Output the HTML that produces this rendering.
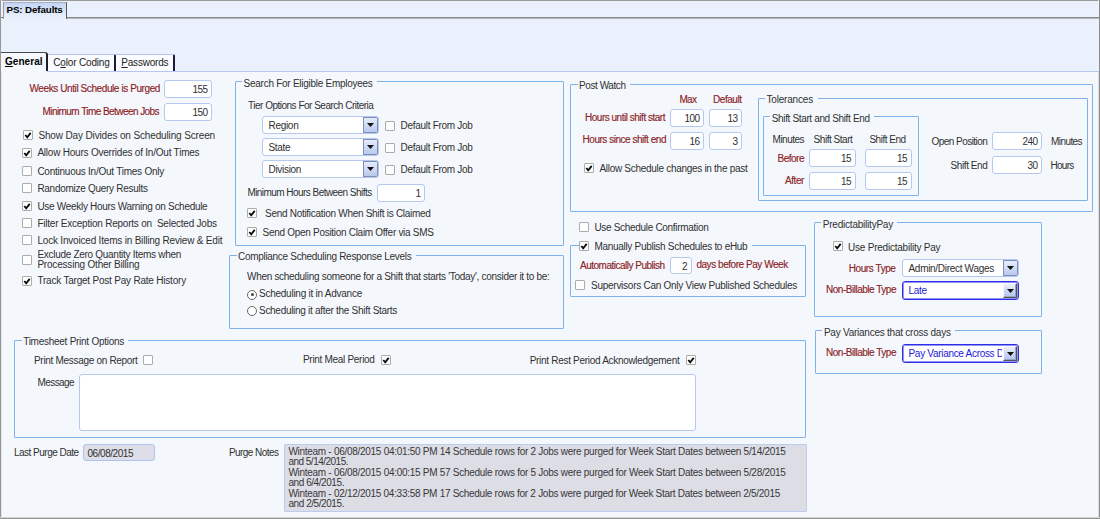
<!DOCTYPE html><html><head><meta charset="utf-8"><title>PS: Defaults</title><style>
html,body{margin:0;padding:0;background:#f4f8fd;}
body{width:1100px;height:519px;position:relative;overflow:hidden;font-family:"Liberation Sans",sans-serif;font-size:10px;color:#1a1a1a;}
body>div,body>span{position:absolute;}
.t{white-space:nowrap;}
.in{border:1px solid #b4c8f0;border-radius:3px;background:#fff;font-size:10px;}
.cb{border:1px solid #acacac;background:#fdfdfd;border-radius:1px;}
.rd{width:8px;height:8px;border:1px solid #6a6a6a;border-radius:50%;background:#fff;}
.rd i{position:absolute;left:2.5px;top:2.5px;width:3px;height:3px;border-radius:50%;background:#444;}
.gb{border:1px solid #80b2ea;border-radius:1px;}
.dd{position:absolute;border:1px solid #7d8fb6;background:linear-gradient(#e6ecfa,#b9c8ee);}
.notes{background:#dcdde6;border:1px solid #b4c8f0;font-size:10px;line-height:10.5px;padding:2px 4px;box-sizing:border-box;color:#222;overflow:hidden;}
</style></head><body>
<div style="left:0px;top:0px;width:1100px;height:519px;background:#f4f8fd;"></div>
<div style="left:0px;top:0px;width:1100px;height:1px;background:#9a9a9a;"></div>
<div style="left:0px;top:0px;width:1px;height:519px;background:#969696;"></div>
<div style="left:1px;top:0px;width:1px;height:519px;background:#dfe3ea;"></div>
<div style="left:1099px;top:0px;width:1px;height:519px;background:#8c8c8c;"></div>
<div style="left:1098px;top:0px;width:1px;height:519px;background:#d9dde4;"></div>
<div style="left:0px;top:517px;width:1100px;height:1px;background:#d0d2d6;"></div>
<div style="left:0px;top:518px;width:1100px;height:1px;background:#969696;"></div>
<div style="left:1px;top:1px;width:1098px;height:70px;background:#eaf0fc;"></div>
<div style="left:66px;top:17px;width:1033px;height:1px;background:#8a8a8a;"></div>
<div style="left:66px;top:18px;width:1033px;height:1px;background:#b4b8c0;"></div>
<div style="left:1px;top:17px;width:2px;height:1px;background:#777;"></div>
<div style="left:3px;top:2px;width:64px;height:17px;background:linear-gradient(#c3d4f3,#e6eefb 80%, #eaf0fc);border:1px solid #9a9a9a;border-top-color:#aab2c2;border-right:1px solid #5a5a5a;border-bottom:none;box-sizing:border-box;"></div>
<span id="t0" class="t" style="left:6.5px;top:2px;height:16px;line-height:16px;color:#000;font-size:9.8px;letter-spacing:-0.127px;font-weight:bold;">PS: Defaults</span>
<div style="left:47px;top:71px;width:1052px;height:1px;background:#b9c6f2;"></div>
<div style="left:1px;top:52px;width:47px;height:19px;background:#f4f8fd;border-top:1px solid #4a4a4a;border-right:2px solid #1c1c2c;box-sizing:border-box;border-top-right-radius:3px;"></div>
<div style="left:1px;top:71px;width:46px;height:1px;background:#f4f8fd;"></div>
<span id="t1" class="t" style="left:5px;top:54px;height:16px;line-height:16px;color:#000;font-size:10px;letter-spacing:0.054px;font-weight:bold;"><u>G</u>eneral</span>
<div style="left:48px;top:54px;width:68px;height:17px;background:#fbfcff;border-top:1px solid #b9c6f2;border-right:2px solid #1c1c3c;box-sizing:border-box;border-top-right-radius:2px;"></div>
<span id="t2" class="t" style="left:53.3px;top:55px;height:16px;line-height:16px;color:#222;font-size:10px;letter-spacing:-0.173px;">C<u>o</u>lor Coding</span>
<div style="left:116px;top:54px;width:59px;height:17px;background:#fbfcff;border-top:1px solid #b9c6f2;border-right:2px solid #1c1c3c;box-sizing:border-box;border-top-right-radius:2px;"></div>
<span id="t3" class="t" style="left:121.3px;top:55px;height:16px;line-height:16px;color:#222;font-size:10px;letter-spacing:-0.214px;"><u>P</u>asswords</span>
<span id="t4" class="t" style="left:29.5px;top:81px;height:16px;line-height:16px;color:#8c2226;font-size:10px;letter-spacing:-0.406px;-webkit-text-stroke:0.15px currentColor;">Weeks Until Schedule is Purged</span>
<div class="in" style="left:164px;top:80px;width:46px;height:16px;line-height:18px;background:#fff;border-color:#b4c8f0;color:#303030;text-align:right;letter-spacing:-0.6px;"><span style="padding:0 3.5px">155</span></div>
<span id="t5" class="t" style="left:42.5px;top:104px;height:16px;line-height:16px;color:#8c2226;font-size:10px;letter-spacing:-0.564px;-webkit-text-stroke:0.15px currentColor;">Minimum Time Between Jobs</span>
<div class="in" style="left:164px;top:103px;width:46px;height:16px;line-height:18px;background:#fff;border-color:#b4c8f0;color:#303030;text-align:right;letter-spacing:-0.6px;"><span style="padding:0 3.5px">150</span></div>
<div class="cb" style="left:23px;top:130px;width:8px;height:8px;"><svg width="10" height="10" viewBox="0 0 10 10" style="position:absolute;left:-1px;top:-1px"><path d="M2.3 5.0 L4.2 7.3 L7.7 2.9" fill="none" stroke="#0a0a0a" stroke-width="1.8"/></svg></div>
<span id="t6" class="t" style="left:38.4px;top:128px;height:16px;line-height:16px;color:#303030;font-size:10px;letter-spacing:-0.140px;">Show Day Divides on Scheduling Screen</span>
<div class="cb" style="left:22px;top:148px;width:8px;height:8px;"><svg width="10" height="10" viewBox="0 0 10 10" style="position:absolute;left:-1px;top:-1px"><path d="M2.3 5.0 L4.2 7.3 L7.7 2.9" fill="none" stroke="#0a0a0a" stroke-width="1.8"/></svg></div>
<span id="t7" class="t" style="left:37.4px;top:145px;height:16px;line-height:16px;color:#303030;font-size:10px;letter-spacing:-0.218px;">Allow Hours Overrides of In/Out Times</span>
<div class="cb" style="left:22px;top:166px;width:8px;height:8px;"></div>
<span id="t8" class="t" style="left:37.4px;top:164px;height:16px;line-height:16px;color:#303030;font-size:10px;letter-spacing:-0.243px;">Continuous In/Out Times Only</span>
<div class="cb" style="left:22px;top:183px;width:8px;height:8px;"></div>
<span id="t9" class="t" style="left:37.4px;top:181px;height:16px;line-height:16px;color:#303030;font-size:10px;letter-spacing:-0.283px;">Randomize Query Results</span>
<div class="cb" style="left:22px;top:201px;width:8px;height:8px;"><svg width="10" height="10" viewBox="0 0 10 10" style="position:absolute;left:-1px;top:-1px"><path d="M2.3 5.0 L4.2 7.3 L7.7 2.9" fill="none" stroke="#0a0a0a" stroke-width="1.8"/></svg></div>
<span id="t10" class="t" style="left:37.4px;top:199px;height:16px;line-height:16px;color:#303030;font-size:10px;letter-spacing:-0.296px;">Use Weekly Hours Warning on Schedule</span>
<div class="cb" style="left:22px;top:218px;width:8px;height:8px;"></div>
<span id="t11" class="t" style="left:37.4px;top:216px;height:16px;line-height:16px;color:#303030;font-size:10px;letter-spacing:-0.229px;">Filter Exception Reports on&nbsp; Selected Jobs</span>
<div class="cb" style="left:22px;top:235px;width:8px;height:8px;"></div>
<span id="t12" class="t" style="left:37.4px;top:233px;height:16px;line-height:16px;color:#303030;font-size:10px;letter-spacing:-0.194px;">Lock Invoiced Items in Billing Review &amp; Edit</span>
<div class="cb" style="left:22px;top:255px;width:8px;height:8px;"></div>
<span id="t13" class="t" style="left:37.4px;top:247px;height:16px;line-height:16px;color:#303030;font-size:10px;letter-spacing:-0.289px;">Exclude Zero Quantity Items when</span>
<span id="t14" class="t" style="left:37.4px;top:257px;height:16px;line-height:16px;color:#303030;font-size:10px;letter-spacing:-0.197px;">Processing Other Billing</span>
<div class="cb" style="left:22px;top:276px;width:8px;height:8px;"><svg width="10" height="10" viewBox="0 0 10 10" style="position:absolute;left:-1px;top:-1px"><path d="M2.3 5.0 L4.2 7.3 L7.7 2.9" fill="none" stroke="#0a0a0a" stroke-width="1.8"/></svg></div>
<span id="t15" class="t" style="left:37.4px;top:273px;height:16px;line-height:16px;color:#303030;font-size:10px;letter-spacing:-0.207px;">Track Target Post Pay Rate History</span>
<div class="gb" style="left:235px;top:81px;width:327px;height:163px;"></div>
<div style="left:242.1px;top:80px;width:135.00000000000003px;height:3px;background:#f4f8fd;"></div>
<span id="t16" class="t" style="left:243.6px;top:76px;height:16px;line-height:16px;color:#303030;font-size:10px;letter-spacing:-0.267px;">Search For Eligible Employees</span>
<span id="t17" class="t" style="left:248px;top:98px;height:16px;line-height:16px;color:#303030;font-size:10px;letter-spacing:-0.498px;">Tier Options For Search Criteria</span>
<div class="in" style="left:262px;top:116px;width:115px;height:16px;line-height:18px;border-color:#b4c8f0;color:#303030;text-align:left;overflow:hidden;white-space:nowrap;letter-spacing:-0.3px"><span style="padding:0 5.5px">Region</span><div class="dd" style="right:0px;top:0px;width:13px;height:14px;"><svg width="7" height="4" viewBox="0 0 7 4" style="position:absolute;left:3.0px;top:5.0px"><path d="M0 0H7L3.5 4Z" fill="#111"/></svg></div></div>
<div class="cb" style="left:385px;top:121px;width:8px;height:8px;"></div>
<span id="t18" class="t" style="left:400.6px;top:118px;height:16px;line-height:16px;color:#303030;font-size:10px;letter-spacing:-0.300px;">Default From Job</span>
<div class="in" style="left:262px;top:138px;width:115px;height:16px;line-height:18px;border-color:#b4c8f0;color:#303030;text-align:left;overflow:hidden;white-space:nowrap;letter-spacing:-0.3px"><span style="padding:0 5.5px">State</span><div class="dd" style="right:0px;top:0px;width:13px;height:14px;"><svg width="7" height="4" viewBox="0 0 7 4" style="position:absolute;left:3.0px;top:5.0px"><path d="M0 0H7L3.5 4Z" fill="#111"/></svg></div></div>
<div class="cb" style="left:385px;top:143px;width:8px;height:8px;"></div>
<span id="t19" class="t" style="left:400.6px;top:140px;height:16px;line-height:16px;color:#303030;font-size:10px;letter-spacing:-0.300px;">Default From Job</span>
<div class="in" style="left:262px;top:160px;width:115px;height:16px;line-height:18px;border-color:#b4c8f0;color:#303030;text-align:left;overflow:hidden;white-space:nowrap;letter-spacing:-0.3px"><span style="padding:0 5.5px">Division</span><div class="dd" style="right:0px;top:0px;width:13px;height:14px;"><svg width="7" height="4" viewBox="0 0 7 4" style="position:absolute;left:3.0px;top:5.0px"><path d="M0 0H7L3.5 4Z" fill="#111"/></svg></div></div>
<div class="cb" style="left:385px;top:165px;width:8px;height:8px;"></div>
<span id="t20" class="t" style="left:400.6px;top:162px;height:16px;line-height:16px;color:#303030;font-size:10px;letter-spacing:-0.300px;">Default From Job</span>
<span id="t21" class="t" style="left:247.4px;top:185px;height:16px;line-height:16px;color:#303030;font-size:10px;letter-spacing:-0.546px;">Minimum Hours Between Shifts</span>
<div class="in" style="left:377px;top:184px;width:46px;height:16px;line-height:18px;background:#fff;border-color:#b4c8f0;color:#303030;text-align:right;letter-spacing:-0.6px;"><span style="padding:0 3.5px">1</span></div>
<div class="cb" style="left:247px;top:208px;width:8px;height:8px;"><svg width="10" height="10" viewBox="0 0 10 10" style="position:absolute;left:-1px;top:-1px"><path d="M2.3 5.0 L4.2 7.3 L7.7 2.9" fill="none" stroke="#0a0a0a" stroke-width="1.8"/></svg></div>
<span id="t22" class="t" style="left:265px;top:206px;height:16px;line-height:16px;color:#303030;font-size:10px;letter-spacing:-0.286px;">Send Notification When Shift is Claimed</span>
<div class="cb" style="left:247px;top:227px;width:8px;height:8px;"><svg width="10" height="10" viewBox="0 0 10 10" style="position:absolute;left:-1px;top:-1px"><path d="M2.3 5.0 L4.2 7.3 L7.7 2.9" fill="none" stroke="#0a0a0a" stroke-width="1.8"/></svg></div>
<span id="t23" class="t" style="left:262.6px;top:225px;height:16px;line-height:16px;color:#303030;font-size:10px;letter-spacing:-0.293px;">Send Open Position Claim Offer via SMS</span>
<div class="gb" style="left:229px;top:255px;width:333px;height:72px;"></div>
<div style="left:236.5px;top:254px;width:179.39999999999998px;height:3px;background:#f4f8fd;"></div>
<span id="t24" class="t" style="left:238px;top:249px;height:16px;line-height:16px;color:#303030;font-size:10px;letter-spacing:-0.302px;">Compliance Scheduling Response Levels</span>
<span id="t25" class="t" style="left:247px;top:269px;height:16px;line-height:16px;color:#303030;font-size:10px;letter-spacing:-0.301px;">When scheduling someone for a Shift that starts 'Today', consider it to be:</span>
<div class="rd" style="left:247px;top:289.5px;"><i></i></div>
<span id="t26" class="t" style="left:259px;top:286px;height:16px;line-height:16px;color:#303030;font-size:10px;letter-spacing:-0.249px;">Scheduling it in Advance</span>
<div class="rd" style="left:247px;top:305.6px;"></div>
<span id="t27" class="t" style="left:259px;top:303px;height:16px;line-height:16px;color:#303030;font-size:10px;letter-spacing:-0.289px;">Scheduling it after the Shift Starts</span>
<div class="gb" style="left:570px;top:84px;width:521px;height:126px;"></div>
<div style="left:577.5px;top:83px;width:52.60000000000002px;height:3px;background:#f4f8fd;"></div>
<span id="t28" class="t" style="left:579px;top:78px;height:16px;line-height:16px;color:#303030;font-size:10px;letter-spacing:-0.417px;">Post Watch</span>
<span id="t29" class="t" style="left:679.4px;top:92px;height:16px;line-height:16px;color:#8c2226;font-size:10px;letter-spacing:-0.635px;-webkit-text-stroke:0.15px currentColor;">Max</span>
<span id="t30" class="t" style="left:713px;top:92px;height:16px;line-height:16px;color:#8c2226;font-size:10px;letter-spacing:-0.441px;-webkit-text-stroke:0.15px currentColor;">Default</span>
<span id="t31" class="t" style="left:585px;top:110px;height:16px;line-height:16px;color:#8c2226;font-size:10px;letter-spacing:-0.485px;-webkit-text-stroke:0.15px currentColor;">Hours until shift start</span>
<div class="in" style="left:670px;top:109px;width:32px;height:16px;line-height:18px;background:#fff;border-color:#b4c8f0;color:#303030;text-align:right;letter-spacing:-0.6px;"><span style="padding:0 3.5px">100</span></div>
<div class="in" style="left:708.5px;top:109px;width:31.5px;height:16px;line-height:18px;background:#fff;border-color:#b4c8f0;color:#303030;text-align:right;letter-spacing:-0.6px;"><span style="padding:0 3.5px">13</span></div>
<span id="t32" class="t" style="left:582.6px;top:132px;height:16px;line-height:16px;color:#8c2226;font-size:10px;letter-spacing:-0.476px;-webkit-text-stroke:0.15px currentColor;">Hours since shift end</span>
<div class="in" style="left:670px;top:131.5px;width:32px;height:16.0px;line-height:18.0px;background:#fff;border-color:#b4c8f0;color:#303030;text-align:right;letter-spacing:-0.6px;"><span style="padding:0 3.5px">16</span></div>
<div class="in" style="left:708.5px;top:131.5px;width:31.5px;height:16.0px;line-height:18.0px;background:#fff;border-color:#b4c8f0;color:#303030;text-align:right;letter-spacing:-0.6px;"><span style="padding:0 3.5px">3</span></div>
<div class="cb" style="left:584px;top:163px;width:8px;height:8px;"><svg width="10" height="10" viewBox="0 0 10 10" style="position:absolute;left:-1px;top:-1px"><path d="M2.3 5.0 L4.2 7.3 L7.7 2.9" fill="none" stroke="#0a0a0a" stroke-width="1.8"/></svg></div>
<span id="t33" class="t" style="left:599.4px;top:161px;height:16px;line-height:16px;color:#303030;font-size:10px;letter-spacing:-0.291px;">Allow Schedule changes in the past</span>
<div class="gb" style="left:758px;top:98px;width:328px;height:101px;"></div>
<div style="left:765.0px;top:97px;width:52.5px;height:3px;background:#f4f8fd;"></div>
<span id="t34" class="t" style="left:766.5px;top:92px;height:16px;line-height:16px;color:#303030;font-size:10px;letter-spacing:-0.186px;">Tolerances</span>
<div class="gb" style="left:763px;top:116px;width:154px;height:78px;"></div>
<div style="left:770.3px;top:115px;width:103.80000000000007px;height:3px;background:#f4f8fd;"></div>
<span id="t35" class="t" style="left:771.8px;top:111px;height:16px;line-height:16px;color:#303030;font-size:10px;letter-spacing:-0.357px;">Shift Start and Shift End</span>
<span id="t36" class="t" style="left:772.6px;top:132px;height:16px;line-height:16px;color:#303030;font-size:10px;letter-spacing:-0.517px;">Minutes</span>
<span id="t37" class="t" style="left:813.6px;top:132px;height:16px;line-height:16px;color:#303030;font-size:10px;letter-spacing:-0.464px;">Shift Start</span>
<span id="t38" class="t" style="left:869.4px;top:132px;height:16px;line-height:16px;color:#303030;font-size:10px;letter-spacing:-0.488px;">Shift End</span>
<span id="t39" class="t" style="left:777.6px;top:151px;height:16px;line-height:16px;color:#8c2226;font-size:10px;letter-spacing:-0.511px;-webkit-text-stroke:0.15px currentColor;">Before</span>
<div class="in" style="left:808.5px;top:149px;width:45.0px;height:16px;line-height:18px;background:#fff;border-color:#b4c8f0;color:#303030;text-align:right;letter-spacing:-0.6px;"><span style="padding:0 3.5px">15</span></div>
<div class="in" style="left:864.5px;top:149px;width:45.0px;height:16px;line-height:18px;background:#fff;border-color:#b4c8f0;color:#303030;text-align:right;letter-spacing:-0.6px;"><span style="padding:0 3.5px">15</span></div>
<span id="t40" class="t" style="left:785px;top:173px;height:16px;line-height:16px;color:#8c2226;font-size:10px;letter-spacing:-0.425px;-webkit-text-stroke:0.15px currentColor;">After</span>
<div class="in" style="left:808.5px;top:172px;width:45.0px;height:16px;line-height:18px;background:#fff;border-color:#b4c8f0;color:#303030;text-align:right;letter-spacing:-0.6px;"><span style="padding:0 3.5px">15</span></div>
<div class="in" style="left:864.5px;top:172px;width:45.0px;height:16px;line-height:18px;background:#fff;border-color:#b4c8f0;color:#303030;text-align:right;letter-spacing:-0.6px;"><span style="padding:0 3.5px">15</span></div>
<span id="t41" class="t" style="left:931.4px;top:134px;height:16px;line-height:16px;color:#303030;font-size:10px;letter-spacing:-0.525px;">Open Position</span>
<div class="in" style="left:992px;top:132px;width:48px;height:16px;line-height:18px;background:#fff;border-color:#b4c8f0;color:#303030;text-align:right;letter-spacing:-0.6px;"><span style="padding:0 3.5px">240</span></div>
<span id="t42" class="t" style="left:1051px;top:134px;height:16px;line-height:16px;color:#303030;font-size:10px;letter-spacing:-0.574px;">Minutes</span>
<span id="t43" class="t" style="left:950.6px;top:158px;height:16px;line-height:16px;color:#303030;font-size:10px;letter-spacing:-0.422px;">Shift End</span>
<div class="in" style="left:992px;top:156px;width:48px;height:16px;line-height:18px;background:#fff;border-color:#b4c8f0;color:#303030;text-align:right;letter-spacing:-0.6px;"><span style="padding:0 3.5px">30</span></div>
<span id="t44" class="t" style="left:1050.4px;top:158px;height:16px;line-height:16px;color:#303030;font-size:10px;letter-spacing:-0.698px;">Hours</span>
<div class="cb" style="left:579px;top:222px;width:8px;height:8px;"></div>
<span id="t45" class="t" style="left:594.4px;top:220px;height:16px;line-height:16px;color:#303030;font-size:10px;letter-spacing:-0.309px;">Use Schedule Confirmation</span>
<div class="gb" style="left:570px;top:245px;width:234px;height:50px;"></div>
<div style="left:579.0px;top:244px;width:173.0px;height:3px;background:#f4f8fd;"></div>
<div class="cb" style="left:579px;top:241px;width:8px;height:8px;"><svg width="10" height="10" viewBox="0 0 10 10" style="position:absolute;left:-1px;top:-1px"><path d="M2.3 5.0 L4.2 7.3 L7.7 2.9" fill="none" stroke="#0a0a0a" stroke-width="1.8"/></svg></div>
<span id="t46" class="t" style="left:594.4px;top:239px;height:16px;line-height:16px;color:#303030;font-size:10px;letter-spacing:-0.291px;">Manually Publish Schedules to eHub</span>
<span id="t47" class="t" style="left:580px;top:258px;height:16px;line-height:16px;color:#8c2226;font-size:10px;letter-spacing:-0.497px;-webkit-text-stroke:0.15px currentColor;">Automatically Publish</span>
<div class="in" style="left:669.5px;top:256.5px;width:20.0px;height:15.5px;line-height:17.5px;background:#fff;border-color:#b4c8f0;color:#303030;text-align:right;letter-spacing:-0.6px;"><span style="padding:0 3.5px">2</span></div>
<span id="t48" class="t" style="left:696.4px;top:257px;height:16px;line-height:16px;color:#8c2226;font-size:10px;letter-spacing:-0.452px;-webkit-text-stroke:0.15px currentColor;">days before Pay Week</span>
<div class="cb" style="left:575px;top:280px;width:8px;height:8px;"></div>
<span id="t49" class="t" style="left:591px;top:278px;height:16px;line-height:16px;color:#303030;font-size:10px;letter-spacing:-0.260px;">Supervisors Can Only View Published Schedules</span>
<div class="gb" style="left:814px;top:222px;width:226px;height:93px;"></div>
<div style="left:821.3px;top:221px;width:76.20000000000005px;height:3px;background:#f4f8fd;"></div>
<span id="t50" class="t" style="left:822.8px;top:217px;height:16px;line-height:16px;color:#303030;font-size:10px;letter-spacing:-0.219px;">PredictabilityPay</span>
<div class="cb" style="left:833px;top:241px;width:8px;height:8px;"><svg width="10" height="10" viewBox="0 0 10 10" style="position:absolute;left:-1px;top:-1px"><path d="M2.3 5.0 L4.2 7.3 L7.7 2.9" fill="none" stroke="#0a0a0a" stroke-width="1.8"/></svg></div>
<span id="t51" class="t" style="left:848px;top:240px;height:16px;line-height:16px;color:#303030;font-size:10px;letter-spacing:-0.221px;">Use Predictability Pay</span>
<span id="t52" class="t" style="left:848.8px;top:261px;height:16px;line-height:16px;color:#8c2226;font-size:10px;letter-spacing:-0.425px;-webkit-text-stroke:0.15px currentColor;">Hours Type</span>
<div class="in" style="left:902px;top:259px;width:115px;height:16px;line-height:18px;border-color:#b4c8f0;color:#303030;text-align:left;overflow:hidden;white-space:nowrap;letter-spacing:-0.3px"><span style="padding:0 5.5px">Admin/Direct Wages</span><div class="dd" style="right:0px;top:0px;width:13px;height:14px;"><svg width="7" height="4" viewBox="0 0 7 4" style="position:absolute;left:3.0px;top:5.0px"><path d="M0 0H7L3.5 4Z" fill="#111"/></svg></div></div>
<span id="t53" class="t" style="left:826px;top:282px;height:16px;line-height:16px;color:#8c2226;font-size:10px;letter-spacing:-0.483px;-webkit-text-stroke:0.15px currentColor;">Non-Billable Type</span>
<div class="in" style="left:902px;top:281px;width:115px;height:17px;line-height:18px;border:1px solid #2e2eea;border-radius:3px;box-shadow:inset 0 0 0 1px rgba(60,60,240,.55);color:#2020d8;text-align:left;overflow:hidden;white-space:nowrap;letter-spacing:-0.3px"><span style="padding:0 5.5px;display:inline-block;width:88px;overflow:hidden;vertical-align:top;white-space:nowrap">Late</span><div style="position:absolute;right:1px;top:1px;width:14px;height:15px;background:linear-gradient(#eef2fc,#c9d5f3 55%,#b4c4ee);border-top:1px solid #f8faff;border-left:1px solid #f8faff;border-right:1px solid #55554a;border-bottom:1px solid #55554a;box-sizing:border-box;box-shadow:inset -1px -1px 0 #9aa4c0"><svg width="7" height="4" viewBox="0 0 7 4" style="position:absolute;left:2.5px;top:4.5px"><path d="M0 0H7L3.5 4Z" fill="#111"/></svg></div></div>
<div class="gb" style="left:815px;top:330px;width:225px;height:42px;"></div>
<div style="left:822.4px;top:329px;width:132.80000000000007px;height:3px;background:#f4f8fd;"></div>
<span id="t54" class="t" style="left:823.9px;top:325px;height:16px;line-height:16px;color:#303030;font-size:10px;letter-spacing:-0.240px;">Pay Variances that cross days</span>
<span id="t55" class="t" style="left:826px;top:345px;height:16px;line-height:16px;color:#8c2226;font-size:10px;letter-spacing:-0.483px;-webkit-text-stroke:0.15px currentColor;">Non-Billable Type</span>
<div class="in" style="left:902px;top:344px;width:115px;height:17px;line-height:18px;border:1px solid #2e2eea;border-radius:3px;box-shadow:inset 0 0 0 1px rgba(60,60,240,.55);color:#2020d8;text-align:left;overflow:hidden;white-space:nowrap;letter-spacing:-0.3px"><span style="padding:0 5.5px;display:inline-block;width:88px;overflow:hidden;vertical-align:top;white-space:nowrap">Pay Variance Across Days</span><div style="position:absolute;right:1px;top:1px;width:14px;height:15px;background:linear-gradient(#eef2fc,#c9d5f3 55%,#b4c4ee);border-top:1px solid #f8faff;border-left:1px solid #f8faff;border-right:1px solid #55554a;border-bottom:1px solid #55554a;box-sizing:border-box;box-shadow:inset -1px -1px 0 #9aa4c0"><svg width="7" height="4" viewBox="0 0 7 4" style="position:absolute;left:2.5px;top:4.5px"><path d="M0 0H7L3.5 4Z" fill="#111"/></svg></div></div>
<div class="gb" style="left:14px;top:340px;width:790px;height:96px;"></div>
<div style="left:21.7px;top:339px;width:106.8px;height:3px;background:#f4f8fd;"></div>
<span id="t56" class="t" style="left:23.2px;top:334px;height:16px;line-height:16px;color:#303030;font-size:10px;letter-spacing:-0.265px;">Timesheet Print Options</span>
<span id="t57" class="t" style="left:34px;top:353px;height:16px;line-height:16px;color:#303030;font-size:10px;letter-spacing:-0.305px;">Print Message on Report</span>
<div class="cb" style="left:143px;top:355px;width:8px;height:8px;"></div>
<span id="t58" class="t" style="left:303px;top:352px;height:16px;line-height:16px;color:#303030;font-size:10px;letter-spacing:-0.300px;">Print Meal Period</span>
<div class="cb" style="left:381px;top:355px;width:8px;height:8px;"><svg width="10" height="10" viewBox="0 0 10 10" style="position:absolute;left:-1px;top:-1px"><path d="M2.3 5.0 L4.2 7.3 L7.7 2.9" fill="none" stroke="#0a0a0a" stroke-width="1.8"/></svg></div>
<span id="t59" class="t" style="left:529.7px;top:353px;height:16px;line-height:16px;color:#303030;font-size:10px;letter-spacing:-0.298px;">Print Rest Period Acknowledgement</span>
<div class="cb" style="left:686px;top:355px;width:8px;height:8px;"><svg width="10" height="10" viewBox="0 0 10 10" style="position:absolute;left:-1px;top:-1px"><path d="M2.3 5.0 L4.2 7.3 L7.7 2.9" fill="none" stroke="#0a0a0a" stroke-width="1.8"/></svg></div>
<span id="t60" class="t" style="left:37.6px;top:375px;height:16px;line-height:16px;color:#303030;font-size:10px;letter-spacing:-0.597px;">Message</span>
<div class="in" style="left:79px;top:373.5px;width:615px;height:55.0px;line-height:57.0px;background:#fff;border-color:#b4c8f0;color:#303030;text-align:right;letter-spacing:-0.6px;"><span style="padding:0 3.5px"></span></div>
<span id="t61" class="t" style="left:14px;top:445px;height:16px;line-height:16px;color:#303030;font-size:10px;letter-spacing:-0.511px;">Last Purge Date</span>
<div class="in" style="left:83px;top:443.5px;width:69.5px;height:15.5px;line-height:17.5px;background:#dddee8;border-color:#aec4f0;color:#303030;text-align:left;letter-spacing:-0.45px;"><span style="padding:0 3.5px">06/08/2015</span></div>
<span id="t62" class="t" style="left:229px;top:445px;height:16px;line-height:16px;color:#303030;font-size:10px;letter-spacing:-0.563px;">Purge Notes</span>
<div style="left:284px;top:444px;width:523px;height:68px;background:#dddde6;border:1px solid #bccbee;box-sizing:border-box;border-radius:1px;"></div>
<span id="t63" class="t" style="left:288.4px;top:444px;height:16px;line-height:16px;color:#383838;font-size:10px;letter-spacing:-0.282px;">Winteam - 06/08/2015 04:01:50 PM 14 Schedule rows for 2 Jobs were purged for Week Start Dates between 5/14/2015</span>
<span id="t64" class="t" style="left:288.4px;top:454px;height:16px;line-height:16px;color:#383838;font-size:10px;letter-spacing:-0.510px;">and 5/14/2015.</span>
<span id="t65" class="t" style="left:288.4px;top:465px;height:16px;line-height:16px;color:#383838;font-size:10px;letter-spacing:-0.282px;">Winteam - 06/08/2015 04:00:15 PM 57 Schedule rows for 5 Jobs were purged for Week Start Dates between 5/28/2015</span>
<span id="t66" class="t" style="left:288.4px;top:475px;height:16px;line-height:16px;color:#383838;font-size:10px;letter-spacing:-0.429px;">and 6/4/2015.</span>
<span id="t67" class="t" style="left:288.4px;top:486px;height:16px;line-height:16px;color:#383838;font-size:10px;letter-spacing:-0.285px;">Winteam - 02/12/2015 04:33:58 PM 17 Schedule rows for 2 Jobs were purged for Week Start Dates between 2/5/2015</span>
<span id="t68" class="t" style="left:288.4px;top:496px;height:16px;line-height:16px;color:#383838;font-size:10px;letter-spacing:-0.429px;">and 2/5/2015.</span>
</body></html>
